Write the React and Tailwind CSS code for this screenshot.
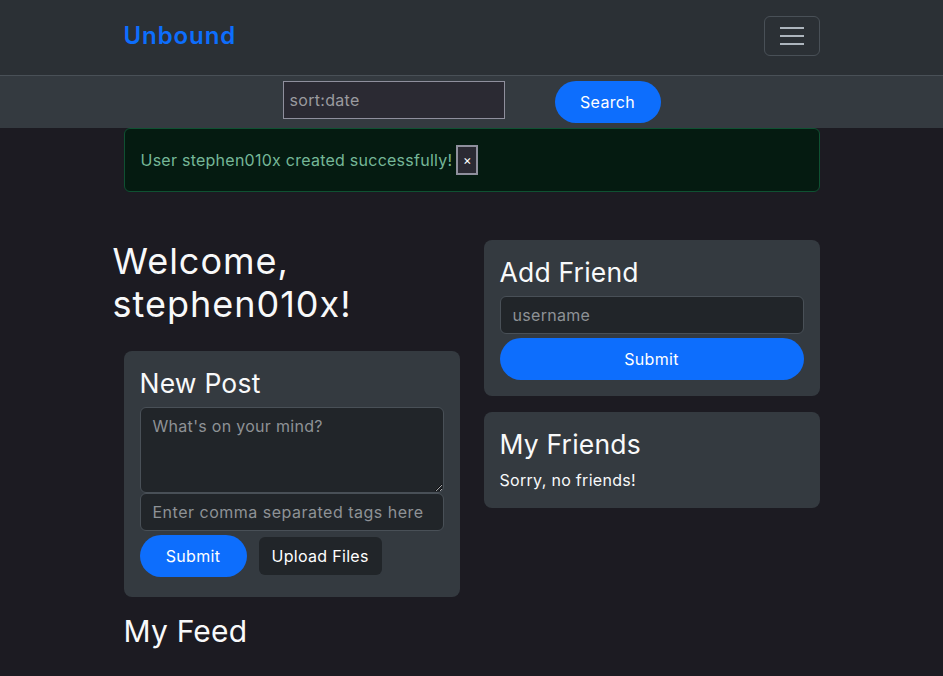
import { useState } from "react";

const font = { fontFamily: "Inter, 'Open Sans', sans-serif" };

function Navbar() {
  return (
    <nav className="bg-[#2b3035] border-b border-[#495057]">
      <div className="mx-auto w-[696px] h-[75px] flex items-start justify-between">
        <a href="#" className="mt-[20px] text-[#0d6efd] text-[24px] leading-[32px] font-semibold tracking-[0.9px]">
          Unbound
        </a>
        <button className="mt-[16px] w-[56px] h-[40px] rounded-md border border-[#495057] flex flex-col items-center justify-center gap-[6px]">
          <span className="block w-[24px] h-[2px] bg-[#adb5bd]" />
          <span className="block w-[24px] h-[2px] bg-[#adb5bd]" />
          <span className="block w-[24px] h-[2px] bg-[#adb5bd]" />
        </button>
      </div>
    </nav>
  );
}

function SearchBar() {
  return (
    <div className="bg-[#343a40] h-[52px] flex items-start justify-center gap-[50px] pt-[5px]">
      <input
        placeholder="sort:date"
        className="w-[222px] h-[38px] bg-[#2b2a33] border border-[#8f8f9d] px-[6px] text-[16px] tracking-[0.3px] text-white placeholder:text-[#9a9a9f] outline-none"
      />
      <button className="w-[106px] h-[42px] rounded-full bg-[#0d6efd] text-white text-[16px] tracking-[0.3px]">
        Search
      </button>
    </div>
  );
}

function Alert() {
  const [open, setOpen] = useState(true);
  if (!open) return <div className="h-[63px]" />;
  return (
    <div className="mx-auto w-[696px] bg-[#051b11] border border-[#0f5132] rounded-md px-4 py-4 flex items-center text-[#75b798] text-[16px] tracking-[0.25px]">
      <span>User stephen010x created successfully!</span>
      <button
        onClick={() => setOpen(false)}
        className="ml-[4px] w-[22px] h-[30px] bg-[#2b2a33] border-2 border-[#8f8f9d] text-white text-[13px] leading-none"
      >
        ×
      </button>
    </div>
  );
}

function Card({ title, children }) {
  return (
    <div className="bg-[#343a40] rounded-lg p-4">
      <h3 className="text-[26.5px] leading-[32px] text-[#f8f9fa] mb-2 tracking-[0.2px]">{title}</h3>
      {children}
    </div>
  );
}

export default function App() {
  return (
    <div className="min-h-screen bg-[#1c1b22] text-[#dee2e6] text-[16px] tracking-[0.3px]" style={font}>
      <Navbar />
      <SearchBar />
      <Alert />
      <div className="mx-auto w-[720px] flex mt-[48px]">
        <div className="w-[360px] px-3">
          <h1 className="-ml-[11px] text-[36px] leading-[43px] text-[#f8f9fa] mb-[25px] tracking-[1px]">
            Welcome,
            <br />
            stephen010x!
          </h1>
          <Card title="New Post">
            <textarea
              placeholder="What's on your mind?"
              className="block w-full h-[86px] bg-[#212529] border border-[#495057] rounded-md px-3 py-[6px] text-[16px] tracking-[0.3px] placeholder:text-[#8e9296] outline-none"
            />
            <input
              placeholder="Enter comma separated tags here"
              className="block w-full h-[38px] bg-[#212529] border border-[#495057] rounded-md px-3 text-[16px] tracking-[0.5px] placeholder:text-[#8e9296] outline-none"
            />
            <div className="flex items-center gap-3 mt-[4px]">
              <button className="w-[107px] h-[42px] rounded-full bg-[#0d6efd] text-white text-[16px]">
                Submit
              </button>
              <button className="h-[38px] px-[13px] rounded-md bg-[#212529] text-white text-[16px]">
                Upload Files
              </button>
            </div>
            <div className="h-[4px]" />
          </Card>
          <h2 className="text-[30px] leading-[36px] text-[#f8f9fa] mt-[16px] tracking-[0.2px]">My Feed</h2>
        </div>
        <div className="w-[360px] px-3 flex flex-col gap-4">
          <Card title="Add Friend">
            <input
              placeholder="username"
              className="block w-full h-[38px] bg-[#212529] border border-[#495057] rounded-md px-3 text-[16px] tracking-[0.3px] placeholder:text-[#8e9296] outline-none"
            />
            <button className="mt-[4px] w-full h-[42px] rounded-full bg-[#0d6efd] text-white text-[16px]">
              Submit
            </button>
          </Card>
          <Card title="My Friends">
            <p className="leading-[24px] text-[#f8f9fa]">Sorry, no friends!</p>
          </Card>
        </div>
      </div>
    </div>
  );
}
